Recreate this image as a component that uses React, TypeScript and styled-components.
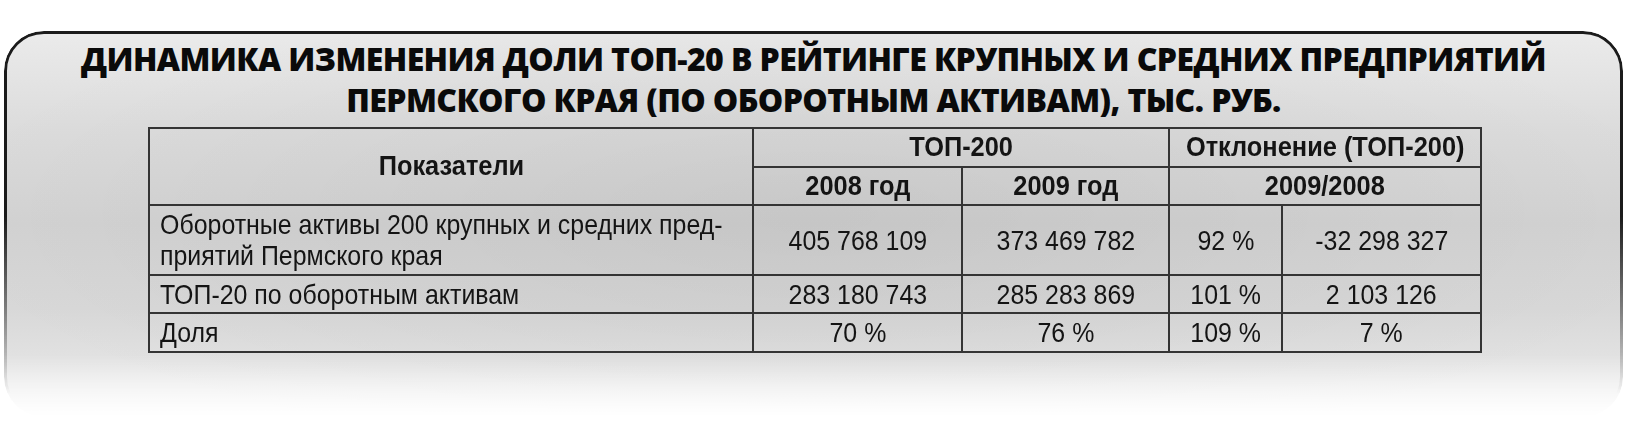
import React from 'react';
import styled, { createGlobalStyle } from 'styled-components';

const GlobalStyle = createGlobalStyle`
  html, body {
    margin: 0;
    padding: 0;
    background: #fff;
  }
  body {
    font-family: 'Liberation Sans', Arial, sans-serif;
    color: #111;
  }
`;

const Page = styled.div`
  width: 1629px;
  height: 448px;
  padding: 31px 6px 0 4px;
  box-sizing: border-box;
`;

// backdrop (fill + frame) fades out towards the bottom, content stays solid
const Panel = styled.section`
  position: relative;
  isolation: isolate;
  height: 386px;
  box-sizing: border-box;
  padding-top: 7px;

  &::before,
  &::after {
    content: '';
    position: absolute;
    inset: 0;
    border-radius: 40px;
    z-index: -1;
  }
  &::before {
    background:
      radial-gradient(ellipse 55% 65% at 50% 48%, rgba(0, 0, 0, 0.06), rgba(0, 0, 0, 0) 100%),
      linear-gradient(to bottom, #ebebeb 0%, #dcdcdc 25%, #d2d2d2 50%, #d8d8d8 72%, #e4e4e4 88%, #f2f2f2 100%);
    mask-image: linear-gradient(to bottom, #000 0%, #000 84%, rgba(0, 0, 0, 0) 100%);
  }
  &::after {
    border: 3px solid #1b1b1b;
    mask-image: linear-gradient(to bottom, #000 0%, #000 48%, rgba(0, 0, 0, 0.35) 78%, rgba(0, 0, 0, 0) 94%);
  }
`;

const Title = styled.h1`
  margin: 0;
  font-family: 'Open Sans', 'DejaVu Sans', sans-serif;
  font-weight: 800;
  font-size: 32px;
  letter-spacing: -0.6px;
  line-height: 41px;
  text-align: center;
  color: #0a0a0a;
  text-transform: uppercase;
`;

const Table = styled.table`
  margin: 7px 0 0 144px;
  width: 1332px;
  border-collapse: collapse;
  table-layout: fixed;
  color: #141414;
`;

const Th = styled.th<{ $h: number }>`
  border: 2px solid #343434;
  font-weight: 700;
  font-size: 27px;
  text-align: center;
  vertical-align: middle;
  padding: 0;
  height: ${(p) => p.$h}px;
  white-space: nowrap;
`;

const Td = styled.td<{ $left?: boolean; $h: number }>`
  border: 2px solid #343434;
  font-weight: 400;
  font-size: 28px;
  text-align: ${(p) => (p.$left ? 'left' : 'center')};
  padding: ${(p) => (p.$left ? '0 10px' : '0')};
  vertical-align: middle;
  line-height: 31px;
  height: ${(p) => p.$h}px;
  white-space: nowrap;
`;

// the source uses a condensed face; squeeze the regular one to match
const Narrow = styled.span<{ $left?: boolean; $k?: number }>`
  display: inline-block;
  transform: scaleX(${(p) => p.$k ?? 0.89});
  transform-origin: ${(p) => (p.$left ? 'left center' : 'center center')};
`;

type Row = { label: React.ReactNode; h: number; values: string[] };

const rows: Row[] = [
  {
    label: (
      <>
        Оборотные активы 200 крупных и средних пред-
        <br />
        приятий Пермского края
      </>
    ),
    h: 68,
    values: ['405 768 109', '373 469 782', '92 %', '-32 298 327'],
  },
  {
    label: 'ТОП-20 по оборотным активам',
    h: 36,
    values: ['283 180 743', '285 283 869', '101 %', '2 103 126'],
  },
  {
    label: 'Доля',
    h: 37,
    values: ['70 %', '76 %', '109 %', '7 %'],
  },
];

export default function App() {
  return (
    <Page>
      <GlobalStyle />
      <Panel>
        <Title>
          Динамика изменения доли ТОП-20 в рейтинге крупных и средних предприятий
          <br />
          Пермского края (по оборотным активам), тыс. руб.
        </Title>
        <Table>
          <colgroup>
            <col style={{ width: 604 }} />
            <col style={{ width: 209 }} />
            <col style={{ width: 207 }} />
            <col style={{ width: 113 }} />
            <col style={{ width: 199 }} />
          </colgroup>
          <thead>
            <tr>
              <Th $h={37} rowSpan={2}>
                <Narrow $k={0.94}>Показатели</Narrow>
              </Th>
              <Th $h={37} colSpan={2}>
                <Narrow $k={0.94}>ТОП-200</Narrow>
              </Th>
              <Th $h={37} colSpan={2}>
                <Narrow $k={0.94}>Отклонение (ТОП-200)</Narrow>
              </Th>
            </tr>
            <tr>
              <Th $h={36}>
                <Narrow $k={0.94}>2008 год</Narrow>
              </Th>
              <Th $h={36}>
                <Narrow $k={0.94}>2009 год</Narrow>
              </Th>
              <Th $h={36} colSpan={2}>
                <Narrow $k={0.94}>2009/2008</Narrow>
              </Th>
            </tr>
          </thead>
          <tbody>
            {rows.map((r, i) => (
              <tr key={i}>
                <Td $left $h={r.h}>
                  <Narrow $left>{r.label}</Narrow>
                </Td>
                {r.values.map((v) => (
                  <Td key={v} $h={r.h}>
                    <Narrow>{v}</Narrow>
                  </Td>
                ))}
              </tr>
            ))}
          </tbody>
        </Table>
      </Panel>
    </Page>
  );
}
